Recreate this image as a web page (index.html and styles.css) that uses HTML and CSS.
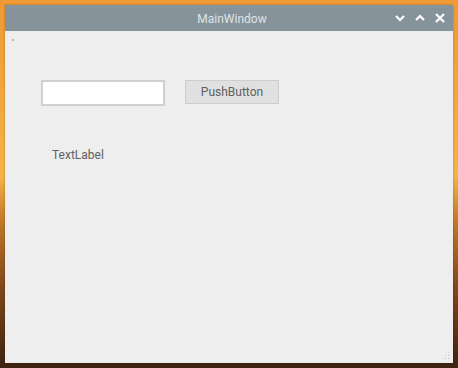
FILE: index.html
```html
<!DOCTYPE html>
<html>
<head>
<meta charset="utf-8">
<link rel="stylesheet" href="styles.css">
</head>
<body>
<div class="desktop">
  <div class="window">
    <div class="titlebar">
      <span class="title">MainWindow</span>
      <div class="controls">
        <svg width="12" height="12" viewBox="0 0 12 12"><path d="M2 4 L6 8 L10 4" fill="none" stroke="#fff" stroke-width="2.2"/></svg>
        <svg width="12" height="12" viewBox="0 0 12 12"><path d="M2 8 L6 4 L10 8" fill="none" stroke="#fff" stroke-width="2.2"/></svg>
        <svg width="12" height="12" viewBox="0 0 12 12"><path d="M2 2 L10 10 M10 2 L2 10" fill="none" stroke="#fff" stroke-width="2.2"/></svg>
      </div>
    </div>
    <div class="content">
      <span class="dot"></span>
      <div class="row">
        <div class="lineedit"></div>
        <div class="button">PushButton</div>
      </div>
      <div class="label">TextLabel</div>
      <div class="grip"></div>
    </div>
  </div>
</div>
</body>
</html>
```
FILE: styles.css
```css
html, body {
  margin: 0;
  padding: 0;
  width: 458px;
  height: 368px;
  overflow: hidden;
}
.desktop {
  width: 458px;
  height: 368px;
  box-sizing: border-box;
  padding: 5px 5px 5px 5px;
  background: linear-gradient(180deg, #ee9a35 0%, #f2aa3e 30%, #f3b446 48%, #c07a28 60%, #80481a 78%, #3c2310 100%);
}
.window {
  width: 448px;
  height: 358px;
  display: flex;
  flex-direction: column;
  box-shadow: 0 0 2px rgba(0,0,0,0.3);
}
.titlebar {
  height: 26px;
  background: #87939b;
  position: relative;
  display: flex;
  align-items: center;
  justify-content: center;
  font-family: Roboto, "Liberation Sans", sans-serif;
  font-size: 12px;
  color: #dfe3e6;
}
.title {
  margin-left: 6px;
  margin-top: 1px;
}
.controls {
  position: absolute;
  right: 7px;
  top: 7px;
  display: flex;
  gap: 8px;
}
.content {
  flex: 1;
  background: #eeeeee;
  position: relative;
  padding: 49px 0 0 36px;
  font-family: Roboto, "Liberation Sans", sans-serif;
  font-size: 12px;
  color: #606060;
}
.dot {
  position: absolute;
  left: 7px;
  top: 8px;
  width: 2px;
  height: 2px;
  background: #b8b8b8;
}
.row {
  display: flex;
  align-items: flex-start;
  gap: 20px;
}
.lineedit {
  width: 124px;
  height: 26px;
  box-sizing: border-box;
  background: #fff;
  border: 2px solid #d0d0d0;
}
.button {
  width: 94px;
  height: 24px;
  box-sizing: border-box;
  background: #e0e0e0;
  border: 1px solid #cdcdcd;
  display: flex;
  align-items: center;
  justify-content: center;
  color: #606060;
  font-size: 12px;
}
.label {
  margin-top: 42px;
  margin-left: 11px;
}
.grip {
  position: absolute;
  right: 3px;
  bottom: 3px;
  width: 9px;
  height: 9px;
  background-image: radial-gradient(circle, #bbb 0.7px, transparent 0.8px);
  background-size: 3px 3px;
  clip-path: polygon(100% 0, 100% 100%, 0 100%);
}
```
